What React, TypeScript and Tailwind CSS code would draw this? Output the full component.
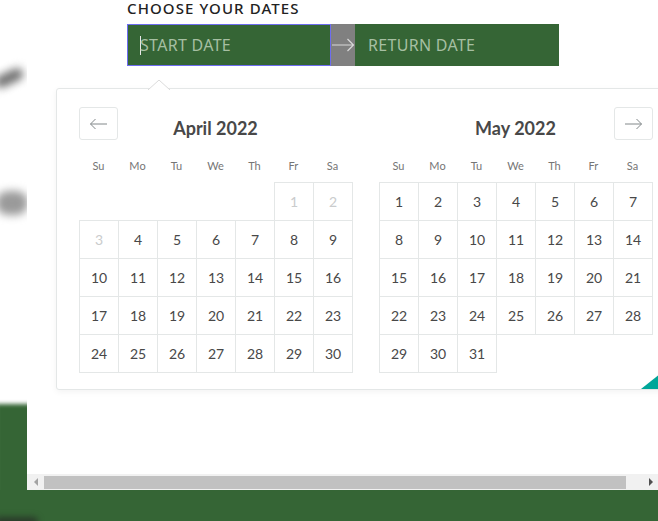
import { memo } from 'react';

const GREEN = '#356535';

interface MonthProps {
    title: string;
    offset: number; // leading empty cells
    days: number;
    disabledUpTo?: number;
}

const WEEKDAYS = ['Su', 'Mo', 'Tu', 'We', 'Th', 'Fr', 'Sa'];

const Month = memo(({ title, offset, days, disabledUpTo = 0 }: MonthProps) => {
    const cells: (number | null)[] = [
        ...Array.from({ length: offset }).map(() => null),
        ...Array.from({ length: days }).map((_, i) => i + 1),
    ];

    return (
        <div className="w-[273px] pt-[29px]">
            <div className="h-[20px] text-center text-[18px] leading-[20px] font-bold text-[#484848]">{title}</div>
            <div className="mt-[20px] grid h-[16px] grid-cols-[repeat(7,39px)] text-[11px] leading-[16px] text-[#757575]">
                {WEEKDAYS.map((d) => (
                    <div key={d} className="text-center">{d}</div>
                ))}
            </div>
            <div className="mt-[8px] grid grid-cols-[repeat(7,39px)] auto-rows-[38px]">
                {cells.map((n, i) =>
                    n === null ? (
                        <div key={i} />
                    ) : (
                        <div
                            key={i}
                            className={`flex h-[39px] w-[40px] items-center justify-center border border-[#e4e7e7] text-[14px] ${
                                n <= disabledUpTo ? 'text-[#cacccd]' : 'text-[#484848]'
                            }`}
                        >
                            {n}
                        </div>
                    ),
                )}
            </div>
        </div>
    );
});

const NavButton = ({ dir }: { dir: 'left' | 'right' }) => (
    <div className="flex h-[33px] w-[39px] items-center justify-center rounded-[3px] border border-[#e4e7e7] bg-white">
        <svg width="19" height="12" viewBox="0 0 19 12" fill="none" stroke="#82888a" strokeWidth="1">
            {dir === 'left' ? <path d="M18 6H1.5M6.5 1 1.5 6l5 5" /> : <path d="M1 6h16.5M12.5 1l5 5-5 5" />}
        </svg>
    </div>
);

export default function App() {
    return (
        <div className="relative flex h-[521px] w-[658px] flex-col overflow-hidden bg-white" style={{ fontFamily: 'Lato, "Noto Sans", sans-serif' }}>
            <div className="flex h-[490px]">
                {/* Blurred page behind, left strip */}
                <div className="relative w-[27px] overflow-hidden">
                    <div className="absolute left-[-6px] top-[72px] h-[12px] w-[30px] -rotate-[25deg] rounded-full bg-[#6f6f6f] blur-[4px]" />
                    <div className="absolute left-[-4px] top-[191px] h-[24px] w-[32px] rounded-full bg-[#9a9a9a] blur-[4px]" />
                    <div className="absolute left-[-4px] top-[404px] h-[100px] w-[36px] bg-[#356535] blur-[2px]" />
                </div>

                {/* Main scroll area */}
                <div className="flex w-[631px] flex-col overflow-hidden">
                    <div className="flex-1 overflow-hidden">
                        <div className="pl-[100px]" style={{ fontFamily: '"Noto Sans", "Open Sans", sans-serif' }}>
                            <div className="h-[18px] text-[15px] leading-[17px] font-medium tracking-[1.1px] text-[#222]">CHOOSE YOUR DATES</div>
                            <div className="mt-[6px] flex h-[42px]">
                                <div className="flex w-[204px] items-center border border-[#6d6df0] pl-[12px] text-[16px] tracking-[0.3px] text-[#a6bfa2]" style={{ backgroundColor: GREEN }}>
                                    <span className="-mr-px h-[19px] w-px bg-[#e8e8e8]" />
                                    START DATE
                                </div>
                                <div className="flex w-[24px] items-center justify-center bg-[#808080]">
                                    <svg width="23" height="14" viewBox="0 0 23 14" fill="none" stroke="#d8d8d8" strokeWidth="1.2">
                                        <path d="M0 7h21.5M15.5 1l6 6-6 6" />
                                    </svg>
                                </div>
                                <div className="flex w-[204px] items-center pl-[13px] text-[16px] tracking-[0.3px] text-[#a6bfa2]" style={{ backgroundColor: GREEN }}>
                                    RETURN DATE
                                </div>
                            </div>
                        </div>

                        {/* Date picker popover */}
                        <div className="relative ml-[29px] mt-[22px] w-[619px] rounded-[3px] border border-[#e4e7e7] bg-white pb-[17px] shadow-[0_2px_6px_rgba(0,0,0,0.05)]">
                            <svg className="absolute left-[91px] top-[-9px]" width="22" height="10" viewBox="0 0 22 10">
                                <path d="M0 10 11 0l11 10" fill="white" stroke="#dbdbdb" strokeWidth="1" />
                                <path d="M1.5 10h19" stroke="white" strokeWidth="1.5" />
                            </svg>
                            <div className="absolute left-[22px] top-[18px]">
                                <NavButton dir="left" />
                            </div>
                            <div className="absolute right-[21px] top-[18px]">
                                <NavButton dir="right" />
                            </div>
                            <div className="flex gap-[27px] pl-[22px]">
                                <Month title="April 2022" offset={5} days={30} disabledUpTo={3} />
                                <Month title="May 2022" offset={0} days={31} />
                            </div>
                            <div className="absolute bottom-0 right-0 h-0 w-0 border-t-[26px] border-r-[33px] border-t-transparent border-r-[#00a699]" />
                        </div>
                    </div>

                    {/* Horizontal scrollbar */}
                    <div className="flex h-[16px] items-center bg-[#f1f1f1]">
                        <div className="flex w-[17px] justify-center">
                            <div className="h-0 w-0 border-y-[4px] border-r-[4px] border-y-transparent border-r-[#a3a3a3]" />
                        </div>
                        <div className="h-[13px] w-[582px] bg-[#c1c1c1]" />
                        <div className="flex flex-1 justify-end pr-[5px]">
                            <div className="h-0 w-0 border-y-[4px] border-l-[4px] border-y-transparent border-l-[#505050]" />
                        </div>
                    </div>
                </div>
            </div>
            <div className="relative h-[31px]" style={{ backgroundColor: GREEN }}>
                <div className="absolute bottom-[-6px] left-[-6px] h-[10px] w-[44px] rounded-full bg-[#2a3a2a] blur-[3px]" />
            </div>
        </div>
    );
}
